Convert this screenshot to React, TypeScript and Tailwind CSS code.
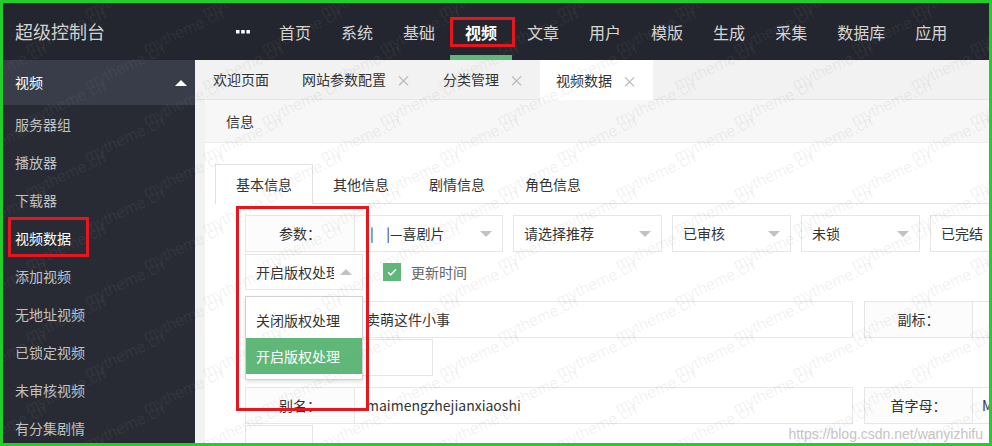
import React from "react";

const navItems = ["首页", "系统", "基础", "视频", "文章", "用户", "模版", "生成", "采集", "数据库", "应用"];
const sideItems = ["服务器组", "播放器", "下载器", "视频数据", "添加视频", "无地址视频", "已锁定视频", "未审核视频", "有分集剧情"];
const pageTabs = [
  { name: "欢迎页面", close: false },
  { name: "网站参数配置", close: true },
  { name: "分类管理", close: true },
  { name: "视频数据", close: true, active: true },
];
const formTabs = ["基本信息", "其他信息", "剧情信息", "角色信息"];

const Arrow = ({ up = false }: { up?: boolean }) => (
  <span
    className={
      up
        ? "shrink-0 w-0 h-0 border-x-[6px] border-x-transparent border-b-[6px] border-b-[#c2c2c2]"
        : "shrink-0 w-0 h-0 border-x-[6px] border-x-transparent border-t-[6px] border-t-[#c2c2c2]"
    }
  />
);

const Select = ({ text, width }: { text: string; width: string }) => (
  <div className={`${width} shrink-0 h-full border border-[#e6e6e6] bg-white/80 flex items-center justify-between pl-[10px] pr-[10px]`}>
    <span className="whitespace-nowrap">{text}</span>
    <Arrow />
  </div>
);

const Label = ({ text, width = "w-[110px]" }: { text: string; width?: string }) => (
  <div className={`${width} shrink-0 h-full border border-[#e6e6e6] bg-[#fbfbfb]/80 flex items-center justify-center`}>
    {text}
  </div>
);

// background watermark, purely decorative
const Watermark = () => {
  const cells = [];
  for (let r = 0; r < 14; r++) {
    for (let c = 0; c < 10; c++) {
      cells.push(
        <span
          key={`${r}-${c}`}
          className="absolute whitespace-nowrap text-[16px] font-['Liberation_Sans',sans-serif] text-[rgba(140,140,140,0.12)] rotate-[-25deg]"
          style={{ left: c * 118 + (r % 2) * 59 - 40, top: r * 36 - 20 }}
        >
          mytheme.cn
        </span>
      );
    }
  }
  return <div className="absolute inset-0 overflow-hidden pointer-events-none">{cells}</div>;
};

export default function App() {
  return (
    <div className="relative w-[992px] h-[446px] overflow-hidden border-[3px] border-[#22cf2a] flex flex-col text-[14px] text-[#333] font-['Noto_Sans_CJK_SC','Liberation_Sans',sans-serif]">
      {/* header */}
      <header className="h-[57px] shrink-0 bg-[#23262e] flex items-center">
        <div className="w-[192px] shrink-0 pl-3 text-[18px] text-[#d2d2d2]">超级控制台</div>
        <nav className="flex h-full ml-[26px]">
          <div className="h-full pl-[15px] pr-[14px] flex items-center">
            <svg width="14" height="4" viewBox="0 0 14 4" fill="white">
              <rect x="0" y="0" width="3.5" height="3.5" />
              <rect x="5.2" y="0" width="3.5" height="3.5" />
              <rect x="10.4" y="0" width="3.5" height="3.5" />
            </svg>
          </div>
          {navItems.map((item) => (
            <div
              key={item}
              className={
                item === "视频"
                  ? "relative shrink-0 h-full px-[15px] flex items-center text-[16px] text-white font-bold"
                  : "relative shrink-0 h-full px-[15px] flex items-center text-[16px] text-[#d6d6d6]"
              }
            >
              {item}
              {item === "视频" && <span className="absolute left-0 right-0 bottom-0 h-[5px] bg-[#5fb878]" />}
            </div>
          ))}
        </nav>
      </header>

      <div className="flex flex-1 min-h-0">
        {/* sidebar */}
        <aside className="w-[192px] shrink-0 bg-[#282b33]">
          <div className="h-[45px] bg-[#393d49] flex items-center justify-between pl-3 pr-[8px] text-white">
            <span>视频</span>
            <span className="w-0 h-0 border-x-[6px] border-x-transparent border-b-[6px] border-b-white" />
          </div>
          {sideItems.map((item) => (
            <div
              key={item}
              className={item === "视频数据" ? "h-[38px] flex items-center pl-3 text-white" : "h-[38px] flex items-center pl-3 text-[#c2c2c2]"}
            >
              {item}
            </div>
          ))}
        </aside>

        {/* main */}
        <main className="flex-1 min-w-0 flex flex-col bg-white overflow-hidden">
          <div className="h-[40px] shrink-0 bg-[#f2f2f2] border-b border-[#e6e6e6] flex">
            {pageTabs.map((t, i) => (
              <div
                key={t.name}
                className={
                  t.active
                    ? "shrink-0 h-[40px] flex items-center pl-[16px] pr-[16px] bg-white"
                    : i === 0
                    ? "shrink-0 h-full flex items-center pl-[18px] pr-[17px]"
                    : "shrink-0 h-full flex items-center pl-[16px] pr-[16px]"
                }
              >
                <span className="whitespace-nowrap">{t.name}</span>
                {t.close && <span className="ml-[10px] text-[15px] leading-none text-[#b4b4b4]">×</span>}
              </div>
            ))}
          </div>

          <div className="flex-1 bg-[#f2f2f2] pl-[10px]">
            <div className="h-full bg-white">
              <div className="h-[43px] bg-[#f7f7f7] border-b border-[#eee] flex items-center pl-[21px]">信息</div>

              <div className="pl-[10px] pt-[21px]">
                {/* form tabs */}
                <div className="flex h-[40px] border-b border-[#e2e2e2]">
                  {formTabs.map((t, i) => (
                    <div
                      key={t}
                      className={
                        i === 0
                          ? "shrink-0 h-[40px] px-5 flex items-center border border-b-0 border-[#e2e2e2] bg-white"
                          : "shrink-0 h-[40px] px-5 flex items-center"
                      }
                    >
                      {t}
                    </div>
                  ))}
                </div>

                {/* form */}
                <div className="relative ml-[30px] mt-[11px] flex flex-col">
                  <div className="flex h-[37px]">
                    <Label text="参数：" />
                    <div className="w-[148px] shrink-0 h-full border border-l-0 border-[#e6e6e6] flex items-center justify-between pl-[15px] pr-[10px]">
                      <span className="whitespace-nowrap">|&nbsp;&nbsp;&nbsp;&nbsp;|—喜剧片</span>
                      <Arrow />
                    </div>
                    <div className="ml-[10px] shrink-0 flex h-full gap-[10px]">
                      <Select text="请选择推荐" width="w-[149px]" />
                      <Select text="已审核" width="w-[119px]" />
                      <Select text="未锁" width="w-[119px]" />
                      <Select text="已完结" width="w-[119px]" />
                    </div>
                  </div>

                  <div className="flex items-center h-[36px] mt-[2px]">
                    <div className="w-[118px] shrink-0 h-full border border-[#e6e6e6] flex items-center justify-between pl-[10px] pr-[10px]">
                      <span className="whitespace-nowrap overflow-hidden w-[78px]">开启版权处理</span>
                      <Arrow up />
                    </div>
                    <span className="ml-[20px] shrink-0 w-[18px] h-[18px] bg-[#5fb878] flex items-center justify-center">
                      <svg width="12" height="12" viewBox="0 0 12 12" fill="none">
                        <path d="M2 6.2l2.6 2.6L10 3.4" stroke="white" strokeWidth="1.6" />
                      </svg>
                    </span>
                    <span className="ml-[10px] text-[#666]">更新时间</span>
                  </div>

                  <div className="flex h-[37px] mt-[11px]">
                    <Label text="名称：" />
                    <div className="w-[498px] shrink-0 h-full border border-l-0 border-[#e6e6e6] flex items-center pl-[11px]">卖萌这件小事</div>
                    <div className="ml-[11px] shrink-0 flex h-full">
                      <Label text="副标：" width="w-[109px]" />
                      <div className="w-[200px] shrink-0 h-full border border-l-0 border-[#e6e6e6]" />
                    </div>
                  </div>

                  <div className="flex h-[37px] mt-[1px]">
                    <Label text="状态：" />
                    <div className="w-[78px] shrink-0 h-full border border-l-0 border-[#e6e6e6]" />
                  </div>

                  <div className="flex h-[37px] mt-[11px]">
                    <Label text="别名：" />
                    <div className="w-[498px] shrink-0 h-full border border-l-0 border-[#e6e6e6] flex items-center pl-[11px]">maimengzhejianxiaoshi</div>
                    <div className="ml-[11px] shrink-0 flex h-full">
                      <Label text="首字母：" width="w-[109px]" />
                      <div className="w-[200px] shrink-0 h-full border border-l-0 border-[#e6e6e6] flex items-center pl-[9px]">MMZJXS</div>
                    </div>
                  </div>

                  <div className="flex h-[37px] mt-[1px]">
                    <div className="w-[68px] shrink-0 h-full border border-[#e6e6e6]" />
                  </div>

                  {/* open dropdown */}
                  <div className="absolute left-0 top-[81px] w-[118px] py-[5px] bg-white border border-[#d2d2d2] shadow-[0_2px_4px_rgba(0,0,0,0.12)]">
                    <div className="h-[36px] flex items-center pl-[10px] whitespace-nowrap">关闭版权处理</div>
                    <div className="h-[36px] flex items-center pl-[10px] whitespace-nowrap bg-[#5fb878] text-white">开启版权处理</div>
                  </div>
                </div>
              </div>
            </div>
          </div>
        </main>
      </div>

      <Watermark />

      {/* annotation boxes */}
      <div className="absolute left-[447px] top-[14px] w-[65px] h-[30px] border-[3px] border-[#e8141e] pointer-events-none" />
      <div className="absolute left-[5px] top-[214px] w-[81px] h-[40px] border-[3px] border-[#e8141e] pointer-events-none" />
      <div className="absolute left-[233px] top-[203px] w-[133px] h-[205px] border-[3px] border-[#e8141e] pointer-events-none" />

      <div className="absolute right-[6px] top-[421px] text-[14px] text-[#c4c4c4] font-['Liberation_Sans',sans-serif] pointer-events-none">
        https://blog.csdn.net/wanyizhifu
      </div>
    </div>
  );
}
